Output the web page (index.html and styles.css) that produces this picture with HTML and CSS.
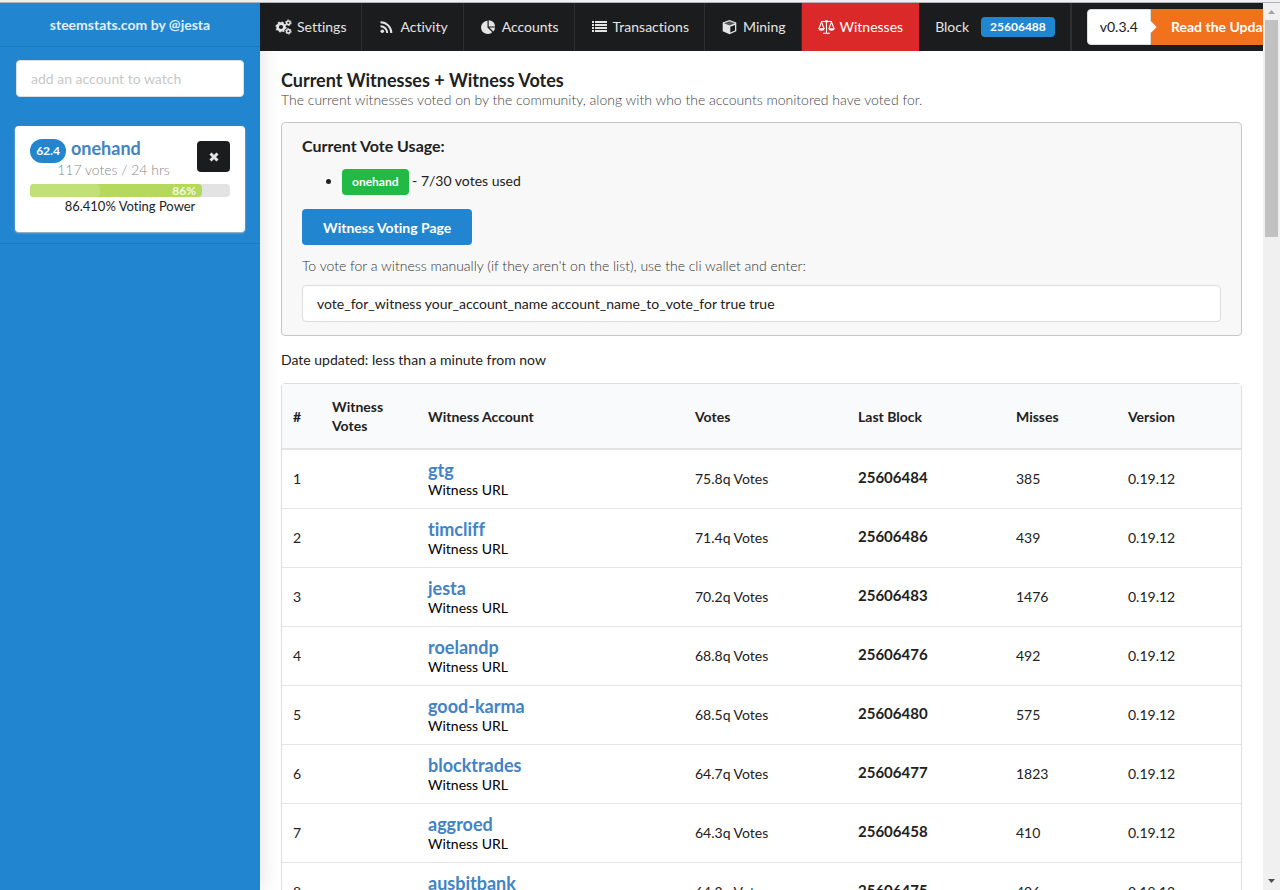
FILE: index.html
```html
<!DOCTYPE html>
<html lang="en">
<head>
  <meta charset="utf-8">
  <title>steemstats.com</title>
  <link rel="stylesheet" href="styles.css">
</head>
<body>
  <div class="window">
    <div class="app">

      <!-- Sidebar -->
      <aside class="sidebar">
        <a class="brand" href="#">steemstats.com by @jesta</a>
        <div class="accounts">
          <div class="watch">
            <input type="text" class="field" placeholder="add an account to watch" aria-label="add an account to watch">
          </div>
          <div class="card">
            <div class="card-top">
              <div class="card-info">
                <div class="card-name"><span class="badge">62.4</span><a class="account-link" href="#">onehand</a></div>
                <div class="card-meta">117 votes / 24 hrs</div>
              </div>
              <button type="button" class="remove" aria-label="Remove">
                <svg width="10" height="10" viewBox="0 0 10 10"><path d="M1.500 1.500l7 7M8.500 1.500l-7 7" stroke="#e4e4e5" stroke-width="3"/></svg>
              </button>
            </div>
            <div class="progress">
              <div class="bar" style="width: 86%"><span class="pulse"></span><span class="percent">86%</span></div>
            </div>
            <div class="power">86.410% Voting Power</div>
          </div>
        </div>
      </aside>

      <div class="main">
        <!-- Top menu -->
        <nav class="menu">
          <a class="item" href="#">
            <svg class="icon" viewBox="0 0 17 16">
              <g fill="none" stroke="currentColor">
                <circle cx="6" cy="8" r="3.4" stroke-width="2.6"/>
                <circle cx="6" cy="8" r="4.8" stroke-width="1.6" stroke-dasharray="1.9 1.87"/>
                <circle cx="13.4" cy="3.7" r="1.8" stroke-width="1.5"/>
                <circle cx="13.4" cy="3.7" r="2.8" stroke-width="1" stroke-dasharray="1.5 1.43"/>
                <circle cx="13.4" cy="12.3" r="1.8" stroke-width="1.5"/>
                <circle cx="13.4" cy="12.3" r="2.8" stroke-width="1" stroke-dasharray="1.5 1.43"/>
              </g>
            </svg>Settings
          </a>
          <a class="item" href="#">
            <svg class="icon" viewBox="0 0 17 16">
              <circle cx="4.3" cy="12.2" r="1.8" fill="currentColor"/>
              <path d="M2.5 7.3a6.7 6.7 0 0 1 6.7 6.7M2.5 3.2A10.8 10.8 0 0 1 13.3 14" fill="none" stroke="currentColor" stroke-width="2"/>
            </svg>Activity
          </a>
          <a class="item" href="#">
            <svg class="icon" viewBox="0 0 17 16">
              <path d="M7.500 1.800v6.700l4.700 4.700A6.600 6.600 0 1 1 7.500 1.800z" fill="currentColor"/>
              <path d="M8.700 1.200a6.400 6.400 0 0 1 6.400 6.400H8.700zM9.300 8.600h5.800a6.400 6.400 0 0 1-1.800 4z" fill="currentColor"/>
            </svg>Accounts
          </a>
          <a class="item" href="#">
            <svg class="icon" viewBox="0 0 17 16">
              <path d="M1 2h2v2H1zM4 2h12v2H4zM1 5h2v2H1zM4 5h12v2H4zM1 8h2v2H1zM4 8h12v2H4zM1 11h2v2H1zM4 11h12v2H4z" fill="currentColor"/>
            </svg>Transactions
          </a>
          <a class="item" href="#">
            <svg class="icon" viewBox="0 0 17 16">
              <path d="M8.5 1l6.8 2.6v8.6L8.5 15.2 1.7 12.2V3.6z" fill="currentColor"/>
              <path d="M3 4.3l5.5 2.1L14 4.3 8.5 2.3z" fill="#1b1c1d" opacity=".7"/>
              <path d="M9.3 7.8L14 6v5.4l-4.7 2.1z" fill="#1b1c1d"/>
            </svg>Mining
          </a>
          <a class="item active" href="#">
            <svg class="icon" viewBox="0 0 17 16">
              <g fill="none" stroke="currentColor" stroke-width="1.1">
                <path d="M3 2.5h11M8.500 1.500v12.500M5 14.300h7M3.500 3L1 9.500M3.500 3L6 9.500M13.500 3L11 9.500M13.500 3L16 9.500"/>
              </g>
              <path d="M0 9.300h7q-.6 2.500-3.500 2.500T0 9.300zM10 9.300h7q-.6 2.500-3.500 2.500T10 9.300z" fill="currentColor"/>
              <circle cx="8.500" cy="2.300" r="1.400" fill="currentColor"/>
            </svg>Witnesses
          </a>
          <div class="item block">Block <span class="label blue">25606488</span></div>
          <div class="release">
            <span class="version">v0.3.4</span>
            <a class="read" href="#">Read the Updates</a>
          </div>
        </nav>

        <!-- Witnesses page -->
        <main class="content">
          <h1>Current Witnesses + Witness Votes</h1>
          <p class="subtitle">The current witnesses voted on by the community, along with who the accounts monitored have voted for.</p>

          <section class="usage">
            <h2>Current Vote Usage:</h2>
            <ul>
              <li><span class="label green">onehand</span> - 7/30 votes used</li>
            </ul>
            <button type="button" class="button">Witness Voting Page</button>
            <label class="hint" for="command">To vote for a witness manually (if they aren't on the list), use the cli wallet and enter:</label>
            <input type="text" class="field" id="command" readonly value="vote_for_witness your_account_name account_name_to_vote_for true true">
          </section>

          <p class="updated">Date updated: less than a minute from now</p>

          <table class="witnesses">
            <thead>
              <tr>
                <th class="col-rank">#</th>
                <th class="col-voted">Witness Votes</th>
                <th class="col-account">Witness Account</th>
                <th class="col-votes">Votes</th>
                <th class="col-block">Last Block</th>
                <th class="col-misses">Misses</th>
                <th>Version</th>
              </tr>
            </thead>
            <tbody>
              <tr>
                <td>1</td><td></td>
                <td><a class="account-link" href="#">gtg</a><a class="url" href="#">Witness URL</a></td>
                <td>75.8q Votes</td><td class="last-block">25606484</td><td>385</td><td>0.19.12</td>
              </tr>
              <tr>
                <td>2</td><td></td>
                <td><a class="account-link" href="#">timcliff</a><a class="url" href="#">Witness URL</a></td>
                <td>71.4q Votes</td><td class="last-block">25606486</td><td>439</td><td>0.19.12</td>
              </tr>
              <tr>
                <td>3</td><td></td>
                <td><a class="account-link" href="#">jesta</a><a class="url" href="#">Witness URL</a></td>
                <td>70.2q Votes</td><td class="last-block">25606483</td><td>1476</td><td>0.19.12</td>
              </tr>
              <tr>
                <td>4</td><td></td>
                <td><a class="account-link" href="#">roelandp</a><a class="url" href="#">Witness URL</a></td>
                <td>68.8q Votes</td><td class="last-block">25606476</td><td>492</td><td>0.19.12</td>
              </tr>
              <tr>
                <td>5</td><td></td>
                <td><a class="account-link" href="#">good-karma</a><a class="url" href="#">Witness URL</a></td>
                <td>68.5q Votes</td><td class="last-block">25606480</td><td>575</td><td>0.19.12</td>
              </tr>
              <tr>
                <td>6</td><td></td>
                <td><a class="account-link" href="#">blocktrades</a><a class="url" href="#">Witness URL</a></td>
                <td>64.7q Votes</td><td class="last-block">25606477</td><td>1823</td><td>0.19.12</td>
              </tr>
              <tr>
                <td>7</td><td></td>
                <td><a class="account-link" href="#">aggroed</a><a class="url" href="#">Witness URL</a></td>
                <td>64.3q Votes</td><td class="last-block">25606458</td><td>410</td><td>0.19.12</td>
              </tr>
              <tr>
                <td>8</td><td></td>
                <td><a class="account-link" href="#">ausbitbank</a><a class="url" href="#">Witness URL</a></td>
                <td>64.2q Votes</td><td class="last-block">25606475</td><td>406</td><td>0.19.12</td>
              </tr>
            </tbody>
          </table>
        </main>
      </div>
    </div>

    <div class="scrollbar" aria-hidden="true">
      <svg width="17" height="17" viewBox="0 0 17 17"><path d="M5 11h7L8.500 7z" fill="#a3a3a3"/></svg>
      <div class="thumb"></div>
      <svg class="down" width="17" height="17" viewBox="0 0 17 17"><path d="M5 6h7L8.500 10z" fill="#505050"/></svg>
    </div>
  </div>
</body>
</html>
```
FILE: styles.css
```css
* {
  box-sizing: border-box;
}

body {
  margin: 0;
  font-family: Lato, "Liberation Sans", sans-serif;
  font-size: 14px;
  font-variant-ligatures: none;
  line-height: 18px;
  color: #212121;
  background: #fff;
}

a {
  text-decoration: none;
}

button,
input {
  font-family: inherit;
  font-size: 14px;
  font-variant-ligatures: none;
}

.window {
  display: flex;
  height: 100vh;
  padding-top: 1px;
  overflow: hidden;
  border-top: 2px solid #f0f0f3;
  box-shadow: inset 0 1px #b4b4b8;
}

.app {
  display: flex;
  flex: 1;
  min-width: 0;
}

/* Sidebar */
.sidebar {
  position: relative;
  z-index: 1;
  flex: none;
  width: 260px;
  background: #2185d0;
  box-shadow: 0 0 20px rgba(34, 36, 38, 0.15);
  clip-path: inset(0 -20px 0 0);
}

.brand {
  display: block;
  padding: 13px 16px 12px;
  border-bottom: 1px solid #1e78bb;
  color: #e0eefa;
  font-weight: bold;
  text-align: center;
}

.accounts {
  padding: 13px 15px 11px;
  border-bottom: 1px solid #1e78bb;
}

.watch {
  padding: 0 1px;
}

.field {
  display: block;
  width: 100%;
  height: 37px;
  padding: 0 14px;
  border: 1px solid #dcddde;
  border-radius: 4px;
  background: #fff;
  color: #212121;
}

.field::placeholder {
  color: #c8c8c8;
}

.card {
  margin-top: 29px;
  padding: 13px 15px 17px;
  border-radius: 4px;
  background: #fff;
  box-shadow: 0 1px 2px #b8bcc0;
}

.card-top {
  display: flex;
  justify-content: space-between;
}

.card-info {
  flex: 1;
}

.card-name {
  display: flex;
  gap: 5px;
  height: 22px;
}

.badge {
  width: 36px;
  height: 24px;
  border-radius: 12px;
  background: #2185d0;
  color: #fff;
  font-size: 12px;
  font-weight: bold;
  line-height: 24px;
  text-align: center;
}

.account-link {
  color: #4183c4;
  font-size: 18px;
  font-weight: bold;
  line-height: 18px;
}

.card-meta {
  color: #888;
  font-weight: 300;
  text-align: center;
}

.remove {
  display: flex;
  align-items: center;
  justify-content: center;
  width: 33px;
  height: 31px;
  margin-top: 2px;
  padding: 0;
  border: 0;
  border-radius: 4px;
  background: #1b1c1d;
}

.progress {
  height: 13px;
  margin-top: 5px;
  border-radius: 4px;
  background: #e3e3e3;
}

.bar {
  display: flex;
  justify-content: space-between;
  height: 13px;
  border-radius: 4px;
  background: #b4d95c;
}

.pulse {
  width: 70px;
  border-radius: 4px;
  background: #c1e077;
}

.percent {
  padding-right: 6px;
  color: #f0f8de;
  font-size: 12px;
  font-weight: bold;
  line-height: 13px;
}

.power {
  font-size: 13px;
  text-align: center;
}

/* Top menu */
.main {
  flex: 1;
  min-width: 0;
}

.menu {
  display: flex;
  height: 48px;
  overflow: hidden;
  background: #1b1c1d;
}

.item {
  display: flex;
  flex: none;
  align-items: center;
  padding: 0 15px 0 16px;
  border-right: 1px solid #2d2e2f;
  color: #e4e4e4;
}

.item:first-child {
  padding-left: 15px;
}

.item.active {
  border-color: #db2828;
  background: #db2828;
  color: #fff;
}

.icon {
  width: 17px;
  height: 16px;
  margin-right: 5px;
}

.item.block {
  gap: 12px;
  border-right-width: 2px;
}

.label {
  display: inline-block;
  border-radius: 4px;
  color: #fff;
  font-size: 12px;
  font-weight: bold;
}

.label.blue {
  padding: 0 9px;
  background: #2185d0;
  line-height: 20px;
}

.label.green {
  padding: 0 10px;
  background: #21ba45;
  line-height: 26px;
}

.release {
  display: flex;
  flex: none;
  align-items: center;
  margin-left: 15px;
  line-height: 36px;
}

.version {
  position: relative;
  padding: 0 12px;
  border: 1px solid #dcddde;
  border-radius: 4px 0 0 4px;
  background: #fff;
  line-height: 34px;
}

/* Pointer from the version onto the orange button */
.version::after {
  content: "";
  position: absolute;
  top: 13px;
  right: -5px;
  width: 8px;
  height: 8px;
  background: #fff;
  transform: rotate(45deg);
}

.read {
  padding: 0 20px;
  border-radius: 0 4px 4px 0;
  background: #f2711c;
  color: #fff;
  font-weight: bold;
}

/* Page content */
.content {
  padding: 19px 21px;
}

h1 {
  margin: 0;
  font-size: 18px;
  font-weight: bold;
  line-height: 21px;
}

.subtitle {
  margin: 0;
  color: #444;
  font-weight: 300;
}

.usage {
  margin: 13px 0 15px;
  padding: 13px 20px;
  border: 1px solid #c6c7c8;
  border-radius: 4px;
  background: #f8f8f8;
}

h2 {
  margin: 0;
  font-size: 16px;
  font-weight: bold;
  line-height: 20px;
}

.usage ul {
  margin: 13px 0 14px;
  padding-left: 40px;
}

.button {
  display: block;
  height: 36px;
  padding: 0 21px;
  border: 0;
  border-radius: 4px;
  background: #2185d0;
  color: #fff;
  font-weight: bold;
}

.hint {
  display: block;
  margin: 12px 0 10px;
  color: #333;
  font-weight: 300;
}

.updated {
  margin: 0 0 14px;
}

/* Witness table */
.witnesses {
  width: 100%;
  table-layout: fixed;
  border: 1px solid #dcddde;
  border-radius: 4px;
  border-spacing: 0;
  text-align: left;
}

th {
  height: 66px;
  padding: 0 11px;
  border-bottom: 2px solid #e3e4e5;
  background: #f9fafb;
  line-height: 19px;
}

td {
  height: 59px;
  padding: 0 11px;
  border-bottom: 1px solid #e5e5e6;
}

.col-rank {
  width: 39px;
}

.col-voted {
  width: 96px;
}

.col-account {
  width: 267px;
}

.col-votes {
  width: 163px;
}

.col-block {
  width: 158px;
}

.col-misses {
  width: 112px;
}

td .account-link,
td .url {
  display: block;
}

td .account-link {
  line-height: 22px;
}

.url {
  color: #000;
}

.last-block {
  padding-bottom: 4px;
  font-size: 15px;
  font-weight: bold;
}

/* Window scrollbar */
.scrollbar {
  display: flex;
  flex: none;
  flex-direction: column;
  width: 17px;
  background: #f0f0f0;
}

.thumb {
  height: 217px;
  margin: 0 2px;
  background: #c1c1c1;
}

.scrollbar .down {
  margin-top: auto;
}
```
